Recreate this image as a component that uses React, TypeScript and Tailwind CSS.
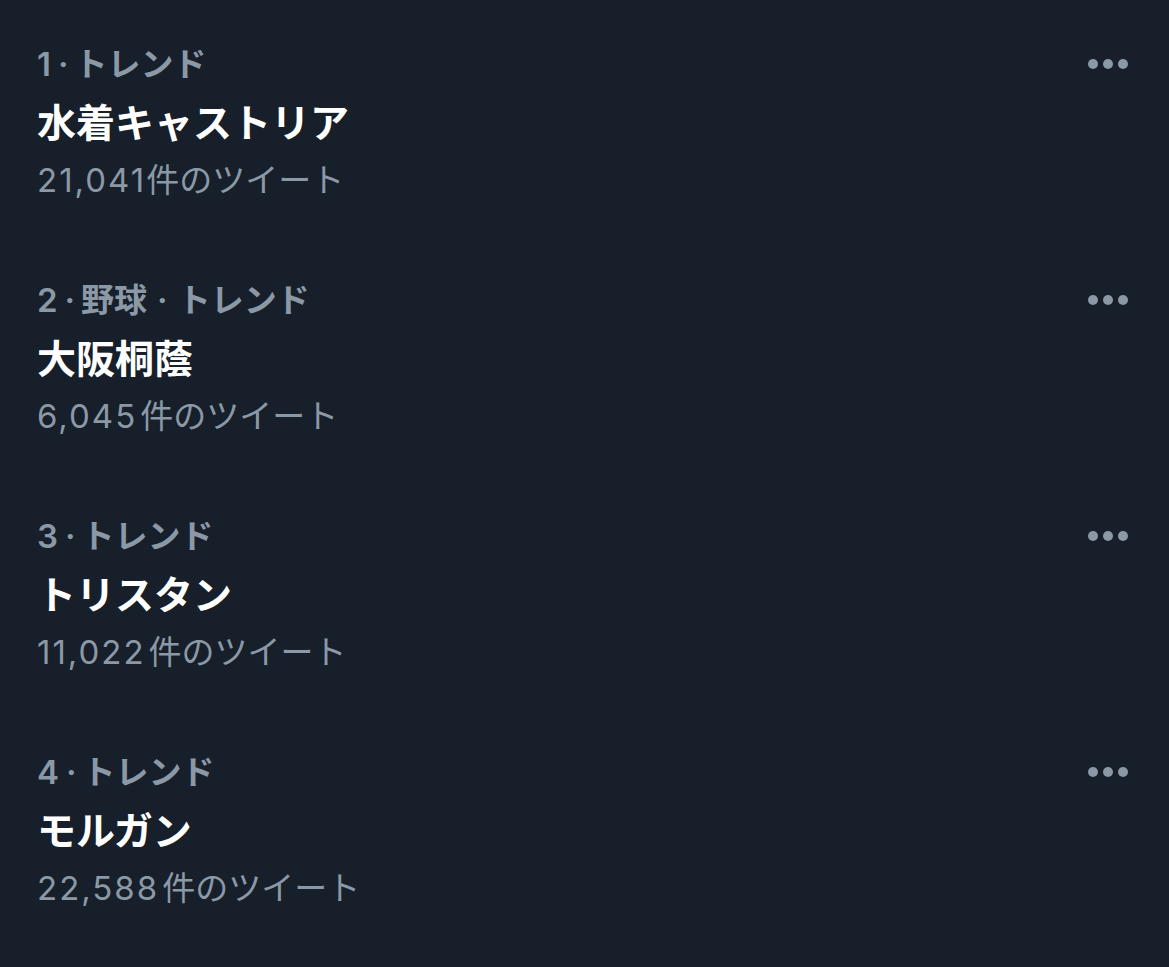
import React from "react";

interface Trend {
  rank: number;
  category?: string;
  title: string;
  count: string;
  gap?: boolean;
}

const trends: Trend[] = [
  { rank: 1, title: "水着キャストリア", count: "21,041" },
  { rank: 2, category: "野球", title: "大阪桐蔭", count: "6,045", gap: true },
  { rank: 3, title: "トリスタン", count: "11,022", gap: true },
  { rank: 4, title: "モルガン", count: "22,588", gap: true },
];

function MoreDots() {
  return (
    <div className="flex items-center gap-[5px] -mt-[3px]">
      <span className="w-[10px] h-[10px] rounded-full bg-[#8b98a5]" />
      <span className="w-[10px] h-[10px] rounded-full bg-[#8b98a5]" />
      <span className="w-[10px] h-[10px] rounded-full bg-[#8b98a5]" />
    </div>
  );
}

function TrendRow({ trend }: { trend: Trend }) {
  return (
    <div className="h-[236px] pt-[36px] pl-[37px] pr-[41px] flex justify-between items-start">
      <div className="flex flex-col">
        <div className="h-[58px] flex items-center text-[33px] font-semibold text-[#8b98a5]">
          <span className="tracking-[1px]">{trend.rank}</span>
          <span className="mx-[6px]">·</span>
          {trend.category && (
            <>
              <span>{trend.category}</span>
              <span className="mx-[10px]">·</span>
            </>
          )}
          <span>トレンド</span>
        </div>
        <div className="h-[58px] flex items-center text-[39px] font-bold text-white">
          {trend.title}
        </div>
        <div className="h-[58px] flex items-center text-[33px] text-[#8b98a5]">
          <span className="tracking-[2px]">{trend.count}</span>
          {trend.gap && <span className="w-[3px]" />}
          <span>件のツイート</span>
        </div>
      </div>
      <div className="h-[58px] flex items-center">
        <MoreDots />
      </div>
    </div>
  );
}

export default function App() {
  return (
    <div
      className="w-[1169px] h-[967px] bg-[#171f2a] overflow-hidden"
      style={{ fontFamily: "Inter, 'Noto Sans CJK JP', sans-serif" }}
    >
      {trends.map((t) => (
        <TrendRow key={t.rank} trend={t} />
      ))}
    </div>
  );
}
